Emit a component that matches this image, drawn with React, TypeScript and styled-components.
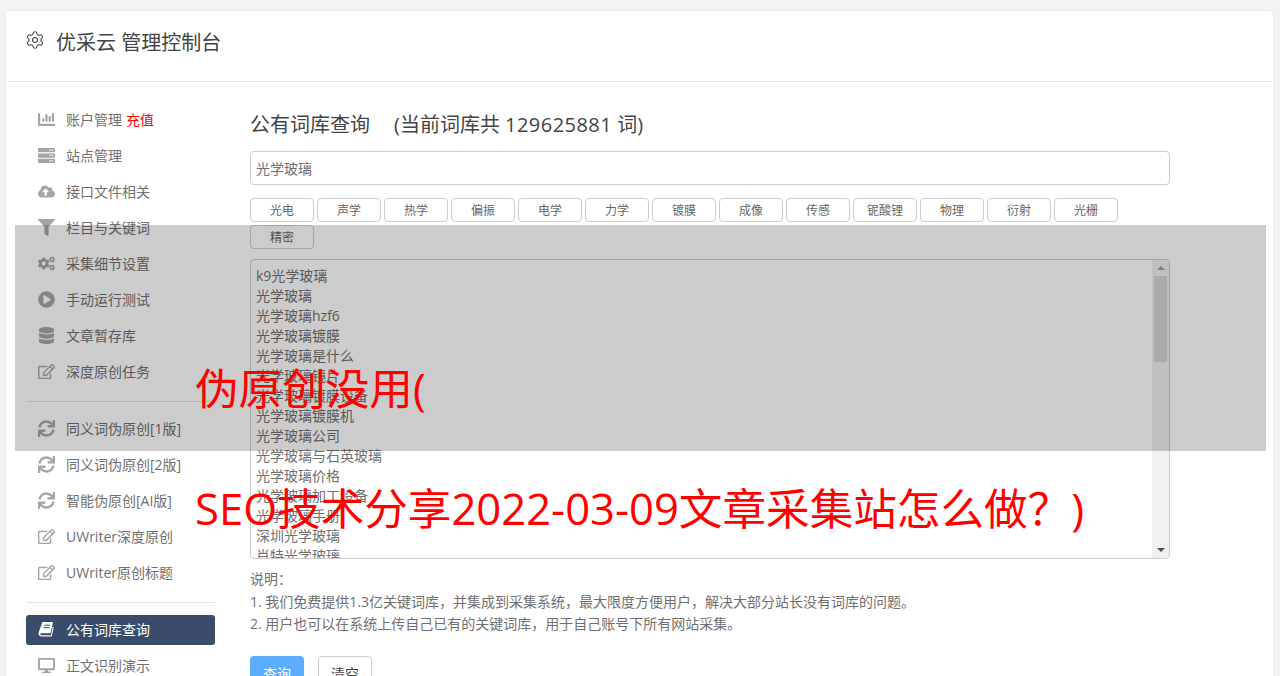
import React from 'react';
import styled, { createGlobalStyle } from 'styled-components';
import { Settings } from 'lucide-react';
import {
	FaChartBar,
	FaCloudUploadAlt,
	FaCogs,
	FaDatabase,
	FaDesktop,
	FaFilter,
	FaPlayCircle,
	FaRegEdit,
	FaServer,
	FaSync,
} from 'react-icons/fa';

const GlobalStyle = createGlobalStyle`
	html, body {
		margin: 0;
		height: 100%;
		overflow: hidden;
		background: #f3f3f3;
		font-family: "Open Sans", "Noto Sans CJK SC", sans-serif;
	}
	* { box-sizing: border-box; }
`;

// tilted book, the icon package only has an upright one
const BookIcon = () => (
	<svg width="16" height="16" viewBox="0 0 16 16">
		<path
			fill="currentColor"
			d="M4.4 1H15l-2.4 11.3H3.4c-.8 0-1.2.5-1 1.1.2.6.7.9 1.3.9H13l1.7-8.6 1 .6-1.9 9.2H3.5C2 15.5.8 14.5.5 13c-.1-.7 0-1.300.3-2z"
		/>
		<path stroke="#3a4c69" strokeWidth="1" d="M6.200 4.200h6M5.600 6.700h6" />
	</svg>
);

const navGroups = [
	[
		{ icon: FaChartBar, label: '账户管理', extra: '充值' },
		{ icon: FaServer, label: '站点管理' },
		{ icon: FaCloudUploadAlt, label: '接口文件相关' },
		{ icon: FaFilter, label: '栏目与关键词' },
		{ icon: FaCogs, label: '采集细节设置' },
		{ icon: FaPlayCircle, label: '手动运行测试' },
		{ icon: FaDatabase, label: '文章暂存库' },
		{ icon: FaRegEdit, label: '深度原创任务' },
	],
	[
		{ icon: FaSync, label: '同义词伪原创[1版]' },
		{ icon: FaSync, label: '同义词伪原创[2版]' },
		{ icon: FaSync, label: '智能伪原创[AI版]' },
		{ icon: FaRegEdit, label: 'UWriter深度原创' },
		{ icon: FaRegEdit, label: 'UWriter原创标题' },
	],
	[
		{ icon: BookIcon, label: '公有词库查询', active: true },
		{ icon: FaDesktop, label: '正文识别演示' },
	],
];

const tags = ['光电', '声学', '热学', '偏振', '电学', '力学', '镀膜', '成像', '传感', '铌酸锂', '物理', '衍射', '光栅', '精密'];

const words = [
	'k9光学玻璃',
	'光学玻璃',
	'光学玻璃hzf6',
	'光学玻璃镀膜',
	'光学玻璃是什么',
	'光学玻璃镜片',
	'光学玻璃镀膜设备',
	'光学玻璃镀膜机',
	'光学玻璃公司',
	'光学玻璃与石英玻璃',
	'光学玻璃价格',
	'光学玻璃加工设备',
	'光学玻璃手册',
	'深圳光学玻璃',
	'肖特光学玻璃',
];

export default function App() {
	return (
		<Page>
			<GlobalStyle />
			<Card>
				<CardHeader>
					<HeaderGear size={20} strokeWidth={1.3} color="#444" />
					<HeaderTitle>优采云 管理控制台</HeaderTitle>
				</CardHeader>
				<CardBody>
					<Sidebar>
						{navGroups.map((group, i) => (
							<NavGroup key={i}>
								{group.map((item) => (
									<NavItem key={item.label} $active={item.active}>
										<NavIcon $active={item.active}><item.icon /></NavIcon>
										{item.label}
										{item.extra && <NavExtra>{item.extra}</NavExtra>}
									</NavItem>
								))}
							</NavGroup>
						))}
					</Sidebar>
					<Main>
						<PageTitle>
							公有词库查询<TitleCount>(当前词库共 <TitleNumber>129625881</TitleNumber> 词)</TitleCount>
						</PageTitle>
						<SearchInput defaultValue="光学玻璃" />
						<TagList>
							{tags.map((tag) => (
								<Tag key={tag}>{tag}</Tag>
							))}
						</TagList>
						<ResultBox>
							<WordList>
								{words.map((word) => (
									<Word key={word}>{word}</Word>
								))}
							</WordList>
							<ScrollBar>
								<ArrowUp />
								<ScrollThumb />
								<ArrowDown />
							</ScrollBar>
						</ResultBox>
						<Notes>
							<div>说明：</div>
							<div>1. 我们免费提供1.3亿关键词库，并集成到采集系统，最大限度方便用户，解决大部分站长没有词库的问题。</div>
							<div>2. 用户也可以在系统上传自己已有的关键词库，用于自己账号下所有网站采集。</div>
						</Notes>
						<Actions>
							<PrimaryButton>查询</PrimaryButton>
							<PlainButton>清空</PlainButton>
						</Actions>
					</Main>
				</CardBody>
			</Card>
			<Banner>
				<BannerText>
					伪原创没用(
					<br />
					SEO技术分享2022-03-09文章采集站怎么做？)
				</BannerText>
			</Banner>
		</Page>
	);
}

const Page = styled.div`
	height: 100vh;
	padding: 11px 7px 0 6px;
	overflow: hidden;
`;

const Card = styled.div`
	background: #fff;
	border: 1px solid #fff;
	border-radius: 4px 4px 0 0;
	box-shadow: 0 0 0 1px #ececec;
	min-height: 800px;
`;

const CardHeader = styled.div`
	display: flex;
	align-items: center;
	height: 70px;
	padding: 0 0 10px 18px;
	border-bottom: 1px solid #e7e7e7;
	color: #444;
`;

const HeaderGear = styled(Settings)`
	margin-top: -4px;
`;

const HeaderTitle = styled.span`
	margin-left: 11px;
	font-size: 20px;
	line-height: 28px;
	position: relative;
	top: 1px;
	color: #444;
`;

const CardBody = styled.div`
	display: flex;
	padding-top: 23px;
`;

const Sidebar = styled.div`
	width: 189px;
	margin-left: 19px;
	flex: none;
`;

const NavGroup = styled.div`
	padding-bottom: 8px;
	margin-bottom: 12px;
	border-bottom: 1px solid #e3e3e3;

	&:last-child {
		border-bottom: 0;
	}
`;

const NavItem = styled.div<{ $active?: boolean }>`
	display: flex;
	align-items: center;
	height: 30px;
	margin-bottom: 6px;
	padding: 0 0 2px 11px;
	border-radius: 3px;
	font-size: 14px;
	color: ${(props) => (props.$active ? '#fff' : '#707070')};
	background: ${(props) => (props.$active ? '#3a4c69' : 'transparent')};
`;

const NavIcon = styled.span<{ $active?: boolean }>`
	display: flex;
	justify-content: center;
	width: 18px;
	margin-right: 11px;
	font-size: 17px;
	color: ${(props) => (props.$active ? '#fff' : '#a5a5a5')};
`;

const NavExtra = styled.span`
	margin-left: 4px;
	color: #f00;
`;

const Main = styled.div`
	width: 920px;
	margin-left: 35px;
	flex: none;
`;

const PageTitle = styled.div`
	height: 34px;
	margin: 3px 0 0;
	font-size: 20px;
	line-height: 34px;
	color: #444;
`;

const TitleCount = styled.span`
	margin-left: 24px;
`;

const TitleNumber = styled.span`
	letter-spacing: 0.45px;
`;

const SearchInput = styled.input`
	display: block;
	width: 100%;
	height: 34px;
	margin-top: 9px;
	padding: 0 5px;
	border: 1px solid #ccc;
	border-radius: 4px;
	font: 14px "Open Sans", "Noto Sans CJK SC", sans-serif;
	color: #707070;
	outline: none;
`;

const TagList = styled.div`
	display: flex;
	flex-wrap: wrap;
	gap: 3px;
	margin-top: 13px;
`;

const Tag = styled.div`
	display: flex;
	align-items: center;
	justify-content: center;
	width: 64px;
	height: 24px;
	border: 1px solid #ccc;
	border-radius: 4px;
	font-size: 12px;
	color: #666;
`;

const ResultBox = styled.div`
	display: flex;
	height: 300px;
	margin-top: 10px;
	border: 1px solid #ccc;
	border-radius: 4px;
	overflow: hidden;
`;

const WordList = styled.div`
	flex: 1;
	padding: 6px 5px 0;
	overflow: hidden;
`;

const Word = styled.div`
	font-size: 14px;
	line-height: 20px;
	color: #707070;
`;

const ScrollBar = styled.div`
	display: flex;
	flex-direction: column;
	align-items: center;
	width: 17px;
	flex: none;
	background: #f1f1f1;
`;

const ArrowUp = styled.div`
	width: 0;
	height: 0;
	margin: 6px 0 6px;
	border-left: 4px solid transparent;
	border-right: 4px solid transparent;
	border-bottom: 4px solid #a3a3a3;
`;

const ScrollThumb = styled.div`
	width: 13px;
	height: 86px;
	background: #d5d5d5;
`;

const ArrowDown = styled.div`
	width: 0;
	height: 0;
	margin-top: auto;
	margin-bottom: 6px;
	border-left: 4px solid transparent;
	border-right: 4px solid transparent;
	border-top: 4px solid #505050;
`;

const Notes = styled.div`
	margin-top: 9px;
	font-size: 14px;
	line-height: 22.5px;
	color: #707070;
`;

const Actions = styled.div`
	display: flex;
	gap: 14px;
	margin-top: 20px;
`;

const PrimaryButton = styled.div`
	display: flex;
	align-items: center;
	justify-content: center;
	width: 54px;
	height: 34px;
	border-radius: 4px;
	font-size: 14px;
	color: #fff;
	background: #5cadff;
`;

const PlainButton = styled(PrimaryButton)`
	border: 1px solid #ccc;
	color: #444;
	background: #fff;
`;

const Banner = styled.div`
	position: absolute;
	left: 15px;
	top: 225px;
	width: 1251px;
	height: 226px;
	background: rgba(0, 0, 0, 0.2);
`;

const BannerText = styled.div`
	padding: 103px 0 0 180px;
	font-size: 43.6px;
	line-height: 120px;
	white-space: nowrap;
	color: #f00;
`;
